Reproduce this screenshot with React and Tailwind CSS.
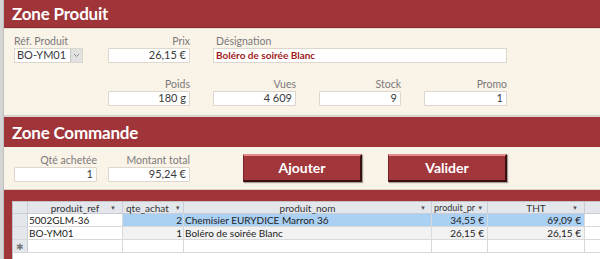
import React from 'react';

const font = { fontFamily: 'Lato, "Liberation Sans", sans-serif' };

function Field({ label, value, width, align = 'right', className = '' }) {
  return (
    <div className={`flex flex-col ${className}`} style={{ width }}>
      <span className={`text-[10.5px] leading-[12px] text-[#7a7a7a] ${align === 'right' ? 'text-right' : 'text-left pl-[3px]'}`}>{label}</span>
      <div className="mt-[1px] h-[15px] bg-white border border-[#dcd6cc] rounded-[1px] flex items-center justify-end pr-[3px] text-[11px] text-[#3a3a3a]">
        {value}
      </div>
    </div>
  );
}

function Bouton({ children, className = '' }) {
  return (
    <button className={`w-[119px] h-[28px] bg-[#a1363b] border-t-[2px] border-t-[#e98c8c] border-l border-l-[#7a2428] border-r-[2px] border-r-[#3a1112] border-b-[2px] border-b-[#3a1112] shadow-[1px_1px_1px_rgba(0,0,0,0.35)] text-white font-bold text-[14px] leading-none ${className}`}>
      {children}
    </button>
  );
}

const cols = 'grid grid-cols-[15px_95px_61px_248px_56px_97px]';

const rows = [
  { ref: '5002GLM-36', qte: '2', nom: 'Chemisier EURYDICE Marron 36', pr: '34,55 €', tht: '69,09 €', sel: true },
  { ref: 'BO-YM01', qte: '1', nom: 'Boléro de soirée Blanc', pr: '26,15 €', tht: '26,15 €' },
];

export default function App() {
  return (
    <div className="w-[600px] h-[259px] overflow-hidden flex bg-[#d6d6d6]" style={font}>
      <div className="w-[4px] bg-[#d4d4d4] border-r border-[#bdbdbd]" />
      <div className="flex-1 flex flex-col">
        {/* Zone Produit */}
        <div className="h-[28px] bg-[#9f3539] flex items-center pl-[8px] border-b border-[#8a2c30]">
          <span className="text-white font-bold text-[17px] leading-none tracking-[-0.2px]">Zone Produit</span>
        </div>
        <div className="h-[88px] bg-[#faf3e8] border-t border-[#e6ddd0] border-b border-b-[#d8d0c4] pt-[6px]">
          <div className="flex items-start">
            <div className="ml-[10px] w-[69px] flex flex-col">
              <span className="text-[10.5px] leading-[12px] text-[#7a7a7a]">Réf. Produit</span>
              <div className="mt-[1px] h-[15px] bg-white border border-[#dcd6cc] flex items-center text-[11px] text-[#3a3a3a]">
                <span className="flex-1 pl-[2px]">BO-YM01</span>
                <div className="w-[12px] h-[13px] bg-[#e1e1e1] border-l border-[#c6c6c6] flex items-center justify-center">
                  <svg width="7" height="5" viewBox="0 0 7 5"><path d="M1 1 L3.5 3.5 L6 1" fill="none" stroke="#8a8a8a" strokeWidth="1" /></svg>
                </div>
              </div>
            </div>
            <Field className="ml-[25px]" label="Prix" value="26,15 €" width={82} />
            <div className="ml-[23px] w-[294px] flex flex-col">
              <span className="text-[10.5px] leading-[12px] text-[#7a7a7a] pl-[3px]">Désignation</span>
              <div className="mt-[1px] h-[15px] bg-white border border-[#dcd6cc] flex items-center pl-[2px] text-[10px] font-bold text-[#a11c22]">
                Boléro de soirée Blanc
              </div>
            </div>
          </div>
          <div className="flex items-start mt-[15px]">
            <Field className="ml-[104px]" label="Poids" value="180 g" width={82} />
            <Field className="ml-[23px]" label="Vues" value="4 609" width={83} />
            <Field className="ml-[23px]" label="Stock" value="9" width={82} />
            <Field className="ml-[23px]" label="Promo" value="1" width={83} />
          </div>
        </div>

        {/* Zone Commande */}
        <div className="h-[30px] bg-[#9f3539] flex items-center pl-[8px] mt-[1px]">
          <span className="text-white font-bold text-[17px] leading-none tracking-[-0.2px]">Zone Commande</span>
        </div>
        <div className="h-[43px] bg-[#faf3e8] border-b border-[#d8d0c4] flex items-start">
          <div className="flex items-start pt-[7px]">
            <Field className="ml-[10px]" label="Qté achetée" value="1" width={83} />
            <Field className="ml-[11px]" label="Montant total" value="95,24 €" width={82} />
          </div>
          <Bouton className="ml-[53px] mt-[7px]">Ajouter</Bouton>
          <Bouton className="ml-[26px] mt-[7px]">Valider</Bouton>
        </div>

        {/* Sous-formulaire */}
        <div className="flex-1 bg-[#9f3539] pt-[11px] pl-[8px] flex flex-col">
          <div className="flex-1 bg-white border-l border-t border-[#c4c4c4] text-[10px] leading-none">
            <div className={`${cols} h-[12px] bg-[#e3e7ec] border-b border-[#c9ced6]`}>
              <div className="border-r border-[#c9ced6]" />
              <div className="border-r border-[#c9ced6] flex items-center text-[#333] relative">
                <span className="flex-1 text-center">produit_ref</span>
                <span className="absolute right-[6px] text-[6px] text-[#555]">▼</span>
              </div>
              <div className="border-r border-[#c9ced6] flex items-center text-[#333] pl-[3px] gap-[6px]">
                <span>qte_achat</span>
                <span className="text-[6px] text-[#555]">▼</span>
              </div>
              <div className="border-r border-[#c9ced6] flex items-center text-[#333] relative">
                <span className="flex-1 text-center">produit_nom</span>
                <span className="absolute right-[5px] text-[6px] text-[#555]">▼</span>
              </div>
              <div className="border-r border-[#c9ced6] flex items-center text-[#333] pl-[2px] gap-[2px] whitespace-nowrap">
                <span className="text-[9px]">produit_pr</span>
                <span className="text-[6px] text-[#555]">▼</span>
              </div>
              <div className="border-r border-[#c9ced6] flex items-center text-[#333] relative">
                <span className="flex-1 text-center">THT</span>
                <span className="absolute right-[6px] text-[6px] text-[#555]">▼</span>
              </div>
            </div>
            {rows.map((r, i) => (
              <div key={i} className={`${cols} h-[13px] border-b border-[#d9d9d9] text-[#222]`}>
                <div className="bg-[#e3e7ec] border-r border-[#c9ced6]" />
                <div className="bg-white border-r border-[#d9d9d9] flex items-center pl-[1px]">{r.ref}</div>
                <div className={`${r.sel ? 'bg-[#aad0f3]' : 'bg-[#f2f2f2]'} border-r border-[#d9d9d9] flex items-center justify-end pr-[1px]`}>{r.qte}</div>
                <div className={`${r.sel ? 'bg-[#aad0f3]' : 'bg-[#f2f2f2]'} border-r border-[#d9d9d9] flex items-center pl-[1px] whitespace-nowrap`}>{r.nom}</div>
                <div className={`${r.sel ? 'bg-[#aad0f3]' : 'bg-[#f2f2f2]'} border-r border-[#d9d9d9] flex items-center justify-end pr-[3px]`}>{r.pr}</div>
                <div className={`${r.sel ? 'bg-[#aad0f3]' : 'bg-[#f2f2f2]'} border-r border-[#d9d9d9] flex items-center justify-end pr-[3px]`}>{r.tht}</div>
              </div>
            ))}
            <div className={`${cols} h-[13px] border-b border-[#d9d9d9]`}>
              <div className="bg-[#e3e7ec] border-r border-[#c9ced6] flex items-center justify-center text-[9px] text-[#777]">✱</div>
              <div className="border-r border-[#d9d9d9]" />
              <div className="border-r border-[#d9d9d9]" />
              <div className="border-r border-[#d9d9d9]" />
              <div className="border-r border-[#d9d9d9]" />
              <div className="border-r border-[#d9d9d9]" />
            </div>
          </div>
        </div>
      </div>
    </div>
  );
}
